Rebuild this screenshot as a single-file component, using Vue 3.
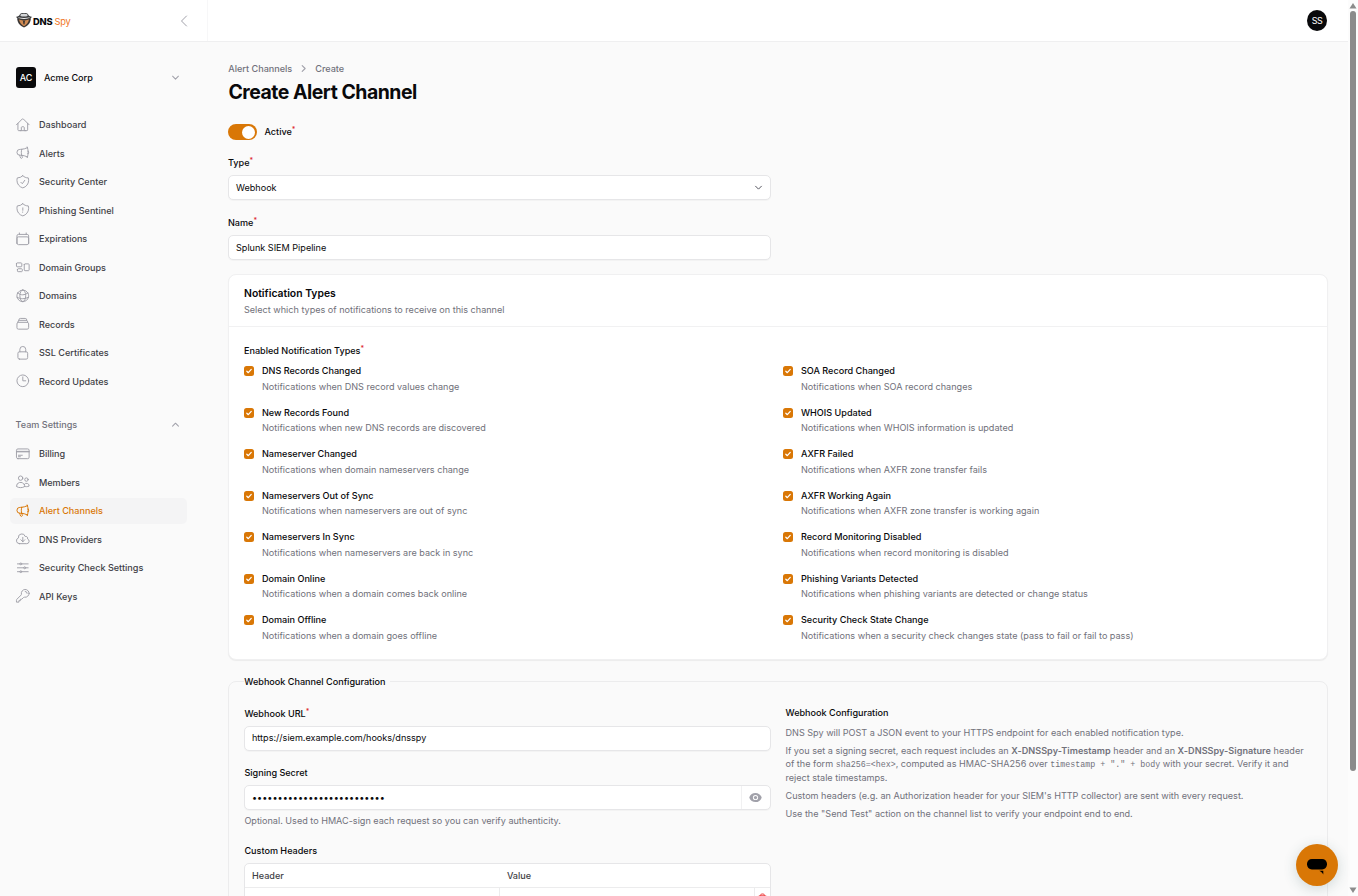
<template>
  <div class="app">
    <header class="topbar">
      <div class="topbar-brand">
        <div class="logo">
          <svg class="logo-mark" viewBox="0 0 16 16">
            <path d="M1.2 6.2h13.6c0 4.400-2.800 7.600-6.800 9.300C4 13.800 1.200 10.600 1.200 6.200Z" fill="#3a3634" />
            <path d="M3 7.600 8 8.700l5-1.100c-.5 3-2.500 5.200-5 6.700-2.500-1.500-4.500-3.700-5-6.700Z" fill="#d08a52" />
            <path d="M7.100 9h1.800L8.600 11.500 8 13l-.6-1.500Z" fill="#2b2b2d" />
            <path d="M.2 4.800c2-.5 3-.9 3.500-2C4 1.300 5 .9 8 .9s4 .4 4.300 1.900c.5 1.100 1.500 1.500 3.500 2-.4 1.800-3.800 2.700-7.800 2.700S.6 6.600.2 4.800Z" fill="#3a3b3d" />
            <path d="M4.700 2.200C6 1.500 10 1.500 11.300 2.200l.3 1.800c-2 .7-5.200.7-7.200 0Z" fill="#d4d6d8" />
            <path d="M1.800 5.300c3.700 1 8.700 1 12.400 0-1.300 1.300-3.500 1.700-6.200 1.700s-4.900-.4-6.200-1.700Z" fill="#f2f2f2" />
          </svg>
          <span class="logo-dns">DNS</span>
          <span class="logo-spy">Spy</span>
        </div>
        <svg class="collapse" viewBox="0 0 24 24"><path d="M15.750 19.500 8.250 12l7.500-7.500" /></svg>
      </div>
      <div class="avatar">SS</div>
    </header>

    <div class="body">
      <aside class="sidebar">
        <div class="tenant">
          <span class="tenant-badge">AC</span>
          <span class="tenant-name">Acme Corp</span>
          <svg class="chevron" viewBox="0 0 20 20"><path d="m5.500 8 4.500 4.500L14.500 8" /></svg>
        </div>
        <nav class="nav">
          <a v-for="item in mainNav" :key="item.label" class="nav-item">
            <svg viewBox="0 0 24 24"><path :d="icons[item.icon]" /></svg>
            <span>{{ item.label }}</span>
          </a>
        </nav>
        <div class="nav-group">
          <span>Team Settings</span>
          <svg class="chevron" viewBox="0 0 20 20"><path d="M5.500 12.500 10 8l4.500 4.500" /></svg>
        </div>
        <nav class="nav">
          <a
            v-for="item in teamNav"
            :key="item.label"
            :class="['nav-item', { active: item.label === current }]"
          >
            <svg viewBox="0 0 24 24"><path :d="icons[item.icon]" /></svg>
            <span>{{ item.label }}</span>
          </a>
        </nav>
      </aside>

      <main class="content">
        <div class="breadcrumbs">
          <span>Alert Channels</span>
          <svg class="crumb-sep" viewBox="0 0 20 20"><path d="m8 5.500 4.500 4.500L8 14.500" /></svg>
          <span>Create</span>
        </div>
        <h1>Create Alert Channel</h1>

        <div class="toggle-row">
          <button class="toggle" type="button" @click="active = !active">
            <span :class="['knob', { on: active }]"></span>
          </button>
          <span class="label">Active<sup>*</sup></span>
        </div>

        <div class="field half">
          <span class="label">Type<sup>*</sup></span>
          <div class="control">
            <span class="value">Webhook</span>
            <svg class="select-arrow" viewBox="0 0 20 20"><path d="m5.500 8 4.500 4.500L14.500 8" /></svg>
          </div>
        </div>

        <div class="field half">
          <span class="label">Name<sup>*</sup></span>
          <div class="control"><span class="value">Splunk SIEM Pipeline</span></div>
        </div>

        <section class="section">
          <div class="section-header">
            <h2>Notification Types</h2>
            <p>Select which types of notifications to receive on this channel</p>
          </div>
          <div class="section-body">
            <span class="label">Enabled Notification Types<sup>*</sup></span>
            <div class="check-grid">
              <div v-for="(column, i) in notifications" :key="i" class="check-col">
                <div v-for="[title, text] in column" :key="title" class="check">
                  <span class="box">
                    <svg viewBox="0 0 16 16"><path d="m4.500 8.400 2.400 2.300 4.700-5.200" /></svg>
                  </span>
                  <div>
                    <div class="check-title">{{ title }}</div>
                    <div class="check-text">{{ text }}</div>
                  </div>
                </div>
              </div>
            </div>
          </div>
        </section>

        <fieldset class="fieldset">
          <legend>Webhook Channel Configuration</legend>
          <div class="config">
            <div class="config-form">
              <div class="field">
                <span class="label">Webhook URL<sup>*</sup></span>
                <div class="control url"><span class="value">https://siem.example.com/hooks/dnsspy</span></div>
              </div>
              <div class="field secret">
                <span class="label">Signing Secret</span>
                <div class="control">
                  <input v-model="secret" class="password" type="password" />
                  <span class="suffix">
                    <svg viewBox="0 0 20 20">
                      <path d="M10 12.500a2.500 2.500 0 1 0 0-5 2.500 2.500 0 0 0 0 5Z" />
                      <path fill-rule="evenodd" d="M.664 10.590a1.651 1.651 0 0 1 0-1.186A10.004 10.004 0 0 1 10 3c4.257 0 7.893 2.660 9.336 6.410.147.381.146.804 0 1.186A10.004 10.004 0 0 1 10 17c-4.257 0-7.893-2.660-9.336-6.410ZM14 10a4 4 0 1 1-8 0 4 4 0 0 1 8 0Z" />
                    </svg>
                  </span>
                </div>
                <p class="hint">Optional. Used to HMAC-sign each request so you can verify authenticity.</p>
              </div>
              <div class="field">
                <span class="label">Custom Headers</span>
                <div class="kv">
                  <div class="kv-row kv-head">
                    <span>Header</span>
                    <span>Value</span>
                  </div>
                  <div class="kv-row kv-body">
                    <span></span>
                    <span></span>
                    <span class="kv-action">
                      <svg viewBox="0 0 20 20"><path fill-rule="evenodd" d="M8.750 1A2.750 2.750 0 0 0 6 3.750v.443c-.795.077-1.584.176-2.365.298a.75.75 0 1 0 .230 1.482l.149-.022.841 10.518A2.750 2.750 0 0 0 7.596 19h4.807a2.750 2.750 0 0 0 2.742-2.530l.841-10.520.149.023a.75.75 0 0 0 .230-1.482A41.030 41.030 0 0 0 14 4.193V3.750A2.750 2.750 0 0 0 11.250 1h-2.500ZM10 4c.840 0 1.673.025 2.500.075V3.750c0-.690-.560-1.250-1.250-1.250h-2.500c-.690 0-1.250.560-1.250 1.250v.325C8.327 4.025 9.160 4 10 4Z" /></svg>
                    </span>
                  </div>
                </div>
              </div>
            </div>

            <div class="config-help">
              <h3>Webhook Configuration</h3>
              <p>DNS Spy will POST a JSON event to your HTTPS endpoint for each enabled notification type.</p>
              <p>
                If you set a signing secret, each request includes an <strong>X-DNSSpy-Timestamp</strong> header and an
                <strong>X-DNSSpy-Signature</strong> header<br />of the form <code>sha256=&lt;hex&gt;</code>, computed as
                HMAC-SHA256 over <code>timestamp + "." + body</code> with your secret. Verify it and<br />reject stale
                timestamps.
              </p>
              <p>Custom headers (e.g. an Authorization header for your SIEM's HTTP collector) are sent with every request.</p>
              <p>Use the "Send Test" action on the channel list to verify your endpoint end to end.</p>
            </div>
          </div>
        </fieldset>
      </main>
    </div>

    <div class="scrollbar">
      <svg viewBox="0 0 10 10"><path d="M5 2.500 8.500 8h-7Z" /></svg>
      <span class="thumb"></span>
      <svg viewBox="0 0 10 10"><path d="M5 7.500 8.500 2h-7Z" /></svg>
    </div>

    <button class="chat" type="button">
      <svg viewBox="0 0 42 42">
        <rect x="11" y="15" width="20" height="10.400" rx="4.800" />
        <path d="M23.300 26.800h4v3.800c-1-1.800-2.300-3-4-3.800Z" />
      </svg>
    </button>
  </div>
</template>

<script setup>
import { ref } from 'vue'

const active = ref(true)
const current = ref('Alert Channels')
const secret = ref('x'.repeat(26))

const mainNav = [
  { label: 'Dashboard', icon: 'home' },
  { label: 'Alerts', icon: 'megaphone' },
  { label: 'Security Center', icon: 'shieldCheck' },
  { label: 'Phishing Sentinel', icon: 'shieldAlert' },
  { label: 'Expirations', icon: 'calendar' },
  { label: 'Domain Groups', icon: 'group' },
  { label: 'Domains', icon: 'globe' },
  { label: 'Records', icon: 'stack' },
  { label: 'SSL Certificates', icon: 'lock' },
  { label: 'Record Updates', icon: 'clock' }
]

const teamNav = [
  { label: 'Billing', icon: 'card' },
  { label: 'Members', icon: 'users' },
  { label: 'Alert Channels', icon: 'megaphone' },
  { label: 'DNS Providers', icon: 'cloud' },
  { label: 'Security Check Settings', icon: 'sliders' },
  { label: 'API Keys', icon: 'key' }
]

const notifications = [
  [
    ['DNS Records Changed', 'Notifications when DNS record values change'],
    ['New Records Found', 'Notifications when new DNS records are discovered'],
    ['Nameserver Changed', 'Notifications when domain nameservers change'],
    ['Nameservers Out of Sync', 'Notifications when nameservers are out of sync'],
    ['Nameservers In Sync', 'Notifications when nameservers are back in sync'],
    ['Domain Online', 'Notifications when a domain comes back online'],
    ['Domain Offline', 'Notifications when a domain goes offline']
  ],
  [
    ['SOA Record Changed', 'Notifications when SOA record changes'],
    ['WHOIS Updated', 'Notifications when WHOIS information is updated'],
    ['AXFR Failed', 'Notifications when AXFR zone transfer fails'],
    ['AXFR Working Again', 'Notifications when AXFR zone transfer is working again'],
    ['Record Monitoring Disabled', 'Notifications when record monitoring is disabled'],
    ['Phishing Variants Detected', 'Notifications when phishing variants are detected or change status'],
    ['Security Check State Change', 'Notifications when a security check changes state (pass to fail or fail to pass)']
  ]
]

const icons = {
  home: 'm2.250 12 8.954-8.955c.440-.439 1.152-.439 1.591 0L21.750 12M4.500 9.750v10.125c0 .621.504 1.125 1.125 1.125H9.750v-4.875c0-.621.504-1.125 1.125-1.125h2.250c.621 0 1.125.504 1.125 1.125V21h4.125c.621 0 1.125-.504 1.125-1.125V9.750M8.250 21h8.250',
  megaphone: 'M10.340 15.840c-.688-.060-1.386-.090-2.090-.090H7.500a4.500 4.500 0 1 1 0-9h.750c.704 0 1.402-.030 2.090-.090m0 9.180c.253.962.584 1.892.985 2.783.247.550.060 1.210-.463 1.511l-.657.380c-.551.318-1.260.117-1.527-.461a20.845 20.845 0 0 1-1.440-4.282m3.102.069a18.030 18.030 0 0 1-.590-4.590c0-1.586.205-3.124.590-4.590m0 9.180a23.848 23.848 0 0 1 8.835 2.535M10.340 6.660a23.847 23.847 0 0 0 8.835-2.535m0 0A23.740 23.740 0 0 0 18.795 3m.380 1.125a23.910 23.910 0 0 1 1.014 5.395m-1.014 8.855c-.118.380-.245.754-.380 1.125m.380-1.125a23.910 23.910 0 0 0 1.014-5.395m0-3.460c.495.413.811 1.035.811 1.730 0 .695-.316 1.317-.811 1.730m0-3.460a24.347 24.347 0 0 1 0 3.460',
  shieldCheck: 'M9 12.750 11.250 15 15 9.750m-3-7.036A11.959 11.959 0 0 1 3.598 6 11.990 11.990 0 0 0 3 9.749c0 5.592 3.824 10.290 9 11.623 5.176-1.332 9-6.030 9-11.622 0-1.310-.210-2.571-.598-3.751h-.152c-3.196 0-6.100-1.248-8.250-3.285Z',
  shieldAlert: 'M12 9v3.750m0-10.036A11.959 11.959 0 0 1 3.598 6 11.990 11.990 0 0 0 3 9.749c0 5.592 3.824 10.290 9 11.622 5.176-1.332 9-6.030 9-11.622 0-1.310-.210-2.570-.598-3.750h-.152c-3.196 0-6.100-1.249-8.250-3.286Zm0 13.036h.008v.008H12v-.008Z',
  calendar: 'M6.750 3v2.250M17.250 3v2.250M3 18.750V7.500a2.250 2.250 0 0 1 2.250-2.250h13.500A2.250 2.250 0 0 1 21 7.500v11.250m-18 0A2.250 2.250 0 0 0 5.250 21h13.500A2.250 2.250 0 0 0 21 18.750m-18 0v-7.500A2.250 2.250 0 0 1 5.250 9h13.500A2.250 2.250 0 0 1 21 11.250v7.500',
  group: 'M2.250 7.125C2.250 6.504 2.754 6 3.375 6h6c.621 0 1.125.504 1.125 1.125v3.750c0 .621-.504 1.125-1.125 1.125h-6a1.125 1.125 0 0 1-1.125-1.125v-3.750ZM14.250 8.625c0-.621.504-1.125 1.125-1.125h5.250c.621 0 1.125.504 1.125 1.125v8.250c0 .621-.504 1.125-1.125 1.125h-5.250a1.125 1.125 0 0 1-1.125-1.125v-8.250ZM3.750 16.125c0-.621.504-1.125 1.125-1.125h5.250c.621 0 1.125.504 1.125 1.125v2.250c0 .621-.504 1.125-1.125 1.125h-5.250a1.125 1.125 0 0 1-1.125-1.125v-2.250Z',
  globe: 'M12 21a9.004 9.004 0 0 0 8.716-6.747M12 21a9.004 9.004 0 0 1-8.716-6.747M12 21c2.485 0 4.500-4.030 4.500-9S14.485 3 12 3m0 18c-2.485 0-4.500-4.030-4.500-9S9.515 3 12 3m0 0a8.997 8.997 0 0 1 7.843 4.582M12 3a8.997 8.997 0 0 0-7.843 4.582m15.686 0A11.953 11.953 0 0 1 12 10.500c-2.998 0-5.740-1.100-7.843-2.918m15.686 0A8.959 8.959 0 0 1 21 12c0 .778-.099 1.533-.284 2.253m0 0A17.919 17.919 0 0 1 12 16.500c-3.162 0-6.133-.815-8.716-2.247m0 0A9.015 9.015 0 0 1 3 12c0-1.605.420-3.113 1.157-4.418',
  stack: 'M6 6.878V6a2.250 2.250 0 0 1 2.250-2.250h7.500A2.250 2.250 0 0 1 18 6v.878m-12 0c.235-.083.487-.128.750-.128h10.500c.263 0 .515.045.750.128m-12 0A2.250 2.250 0 0 0 4.500 9v.878m13.500-3A2.250 2.250 0 0 1 19.500 9v.878m0 0a2.246 2.246 0 0 0-.750-.128H5.250c-.263 0-.515.045-.750.128m15 0A2.250 2.250 0 0 1 21 12v6a2.250 2.250 0 0 1-2.250 2.250H5.250A2.250 2.250 0 0 1 3 18v-6c0-.980.626-1.813 1.500-2.122',
  lock: 'M16.500 10.500V6.750a4.500 4.500 0 1 0-9 0v3.750m-.750 11.250h10.500a2.250 2.250 0 0 0 2.250-2.250v-6.750a2.250 2.250 0 0 0-2.250-2.250H6.750a2.250 2.250 0 0 0-2.250 2.250v6.750a2.250 2.250 0 0 0 2.250 2.250Z',
  clock: 'M12 6v6h4.500m4.500 0a9 9 0 1 1-18 0 9 9 0 0 1 18 0Z',
  card: 'M2.250 8.250h19.500M2.250 9h19.500m-16.500 5.250h6m-6 2.250h3m-3.750 3h15a2.250 2.250 0 0 0 2.250-2.250V6.750A2.250 2.250 0 0 0 19.500 4.500h-15a2.250 2.250 0 0 0-2.250 2.250v10.500A2.250 2.250 0 0 0 4.500 19.500Z',
  users: 'M15 19.128a9.380 9.380 0 0 0 2.625.372 9.337 9.337 0 0 0 4.121-.952 4.125 4.125 0 0 0-7.533-2.493M15 19.128v-.003c0-1.113-.285-2.160-.786-3.070M15 19.128v.106A12.318 12.318 0 0 1 8.624 21c-2.331 0-4.512-.645-6.374-1.766l-.001-.109a6.375 6.375 0 0 1 11.964-3.070M12 6.375a3.375 3.375 0 1 1-6.750 0 3.375 3.375 0 0 1 6.750 0Zm8.250 2.250a2.625 2.625 0 1 1-5.250 0 2.625 2.625 0 0 1 5.250 0Z',
  cloud: 'M12 9.750v6.750m0 0-3-3m3 3 3-3m-8.250 6a4.500 4.500 0 0 1-1.410-8.775 5.250 5.250 0 0 1 10.233-2.330 3 3 0 0 1 3.758 3.848A3.752 3.752 0 0 1 18 19.500H6.750Z',
  sliders: 'M10.500 6h9.750M10.500 6a1.500 1.500 0 1 1-3 0m3 0a1.500 1.500 0 1 0-3 0M3.750 6H7.500m3 12h9.750m-9.750 0a1.500 1.500 0 0 1-3 0m3 0a1.500 1.500 0 0 0-3 0m-3.750 0H7.500m9-6h3.750m-3.750 0a1.500 1.500 0 0 1-3 0m3 0a1.500 1.500 0 0 0-3 0m-9.750 0h9.750',
  key: 'M15.750 5.250a3 3 0 0 1 3 3m3 0a6 6 0 0 1-7.029 5.912c-.563-.097-1.159.026-1.563.430L10.500 17.250H8.250v2.250H6v2.250H2.250v-2.818c0-.597.237-1.170.659-1.591l6.499-6.499c.404-.404.527-1 .430-1.563A6 6 0 1 1 21.750 8.250Z'
}
</script>

<style>
html,
body {
  margin: 0;
  overflow: hidden;
  background: #fafafa;
}
</style>

<style scoped>
.app {
  position: relative;
  width: 1358px;
  height: 896px;
  overflow: hidden;
  background: #fafafa;
  color: #09090b;
  font-family: Inter, 'Liberation Sans', sans-serif;
  font-size: 9.08px;
  line-height: 13px;
}

.app * {
  box-sizing: border-box;
}

svg {
  flex: none;
  fill: none;
  stroke-linecap: round;
  stroke-linejoin: round;
}

button {
  padding: 0;
  border: 0;
}

h1,
h2,
h3,
p {
  margin: 0;
}

.topbar {
  display: flex;
  align-items: center;
  justify-content: space-between;
  width: 1348px;
  height: 42px;
  padding-right: 21px;
  background: #fff;
  border-bottom: 1px solid #efeff0;
}

.topbar-brand {
  display: flex;
  align-items: center;
  justify-content: space-between;
  width: 208px;
  height: 41px;
  padding: 0 15.5px;
  border-right: 1px solid #f7f7f8;
}

.logo {
  display: flex;
  align-items: center;
  margin-top: -1px;
  font-size: 9.3px;
}

.logo-mark {
  width: 16px;
  height: 16px;
}

.logo-dns {
  margin: 3px 2px 0 1.5px;
  font-weight: 800;
  letter-spacing: -0.15px;
}

.logo-spy {
  margin-top: 3px;
  color: #f0761d;
  letter-spacing: -0.3px;
}

.collapse {
  width: 16px;
  height: 16px;
  stroke: #a1a1aa;
  stroke-width: 1.5;
}

.avatar {
  width: 20px;
  height: 21px;
  border-radius: 50%;
  background: #09090b;
  color: #fff;
  font-size: 9px;
  line-height: 21px;
  text-align: center;
  letter-spacing: -0.4px;
}

.body {
  display: flex;
}

.sidebar {
  width: 207px;
  padding: 25px 20px 0 10px;
}

.tenant {
  display: flex;
  align-items: center;
  height: 21px;
  padding: 0 5px 0 6px;
  font-weight: 500;
}

.tenant-badge {
  width: 20px;
  height: 21px;
  margin-right: 8px;
  border-radius: 3px;
  background: #09090b;
  color: #fff;
  font-size: 9px;
  line-height: 21px;
  text-align: center;
}

.chevron {
  width: 13px;
  height: 13px;
  margin-left: auto;
  stroke: #a1a1aa;
  stroke-width: 1.6;
}

.nav {
  display: flex;
  flex-direction: column;
  gap: 2.5px;
}

.tenant + .nav {
  margin-top: 23.5px;
}

.tenant + .nav .nav-item:nth-child(even) span {
  margin-top: 0.3px;
}

.nav-item {
  display: flex;
  align-items: center;
  gap: 7.8px;
  height: 26px;
  padding: 0 5.3px;
  border-radius: 5px;
  color: #3f3f46;
  font-weight: 500;
}

.nav-item svg {
  width: 15.6px;
  height: 15.6px;
  margin-right: 0.3px;
  stroke: #a1a1aa;
  stroke-width: 1.5;
}

.nav-item.active {
  background: #f4f4f5;
  color: #d97706;
}

.nav-item.active svg {
  stroke: #d97706;
}

.nav-group {
  display: flex;
  align-items: center;
  height: 26px;
  margin: 17.4px 0 3.4px;
  padding: 0 5px 0 5.5px;
  color: #71717a;
  font-weight: 500;
}

.content {
  width: 1100px;
  margin-left: 21px;
  padding-top: 20px;
}

.breadcrumbs {
  display: flex;
  align-items: center;
  padding-left: 0.3px;
  color: #71717a;
  font-weight: 500;
}

.crumb-sep {
  width: 13px;
  height: 13px;
  margin: 0 5px;
  stroke: #a1a1aa;
  stroke-width: 1.7;
}

h1 {
  margin-top: 6px;
  padding-left: 0.4px;
  font-size: 19.45px;
  font-weight: 700;
  line-height: 23px;
  letter-spacing: -0.49px;
}

.label {
  display: block;
  height: 13px;
  font-weight: 500;
  white-space: nowrap;
}

.label sup {
  position: relative;
  top: -3px;
  color: #dc2626;
  font-size: 7px;
  line-height: 0;
  vertical-align: baseline;
}

.toggle-row {
  display: flex;
  align-items: flex-start;
  gap: 8px;
  height: 16px;
  margin-top: 20px;
}

.toggle-row .label {
  margin-top: 1px;
}

.toggle {
  display: flex;
  width: 28.5px;
  height: 16px;
  padding: 1.5px;
  border-radius: 8px;
  background: #d97706;
}

.knob {
  width: 13px;
  height: 13px;
  border-radius: 50%;
  background: #fff;
}

.knob.on {
  margin-left: auto;
}

.half {
  width: 542.5px;
}

.content > .field {
  margin-top: 16px;
}

.control {
  display: flex;
  align-items: center;
  height: 25px;
  margin-top: 6px;
  padding-left: 7px;
  border: 1px solid #e6e6e8;
  border-radius: 5px;
  background: #fff;
  box-shadow: 0 1px 1px rgba(0, 0, 0, 0.03);
}

.control.url {
  padding-bottom: 1px;
}

.select-arrow {
  width: 13px;
  height: 13px;
  margin: 0 5px 0 auto;
  stroke: #52525b;
  stroke-width: 1.5;
}

.section {
  height: 385.3px;
  margin-top: 14.4px;
  border: 1px solid #f0f0f1;
  border-radius: 8px;
  background: #fff;
  box-shadow: 0 1px 1px rgba(0, 0, 0, 0.06);
}

.section-header {
  height: 52px;
  padding: 10.6px 15px 0;
  border-bottom: 1px solid #f1f1f2;
}

h2 {
  font-size: 10.38px;
  font-weight: 600;
  line-height: 15px;
}

.section-header p {
  margin-top: 2px;
  color: #71717a;
}

.section-body {
  padding: 16.6px 15px 0;
}

.check-grid {
  display: grid;
  grid-template-columns: 539px 1fr;
  margin-top: 7.2px;
}

.check {
  display: flex;
  gap: 8px;
  height: 41.5px;
}

.box {
  display: flex;
  width: 10px;
  height: 10px;
  margin-top: 2px;
  border-radius: 2.5px;
  background: #d97706;
}

.box svg {
  width: 10px;
  height: 10px;
  stroke: #fff;
  stroke-width: 2;
}

.check-title {
  font-weight: 500;
}

.check-text {
  margin-top: 2.6px;
  color: #71717a;
}

.fieldset {
  height: 260px;
  margin: 15.6px 0 0;
  padding: 0 15px;
  border: 1px solid #ececed;
  border-radius: 8px;
}

legend {
  height: 13px;
  padding: 0 5px 0 0.3px;
  font-weight: 500;
}

.config {
  display: grid;
  grid-template-columns: 526.5px 1fr;
  gap: 15px;
  padding-top: 18px;
}

.config-form {
  padding-top: 0.6px;
}

.config-form .label {
  padding-left: 0.4px;
}

.secret {
  margin: 15.2px 0 17.3px;
}

.password {
  flex: 1;
  min-width: 0;
  padding: 0;
  border: 0;
  outline: 0;
  background: transparent;
  color: #09090b;
  font: inherit;
}

.suffix {
  display: flex;
  align-items: center;
  justify-content: center;
  width: 29px;
  height: 23px;
  border-left: 1px solid #f1f1f2;
}

.suffix svg {
  width: 13px;
  height: 13px;
  fill: #a1a1aa;
}

.hint {
  margin-top: 4px;
  padding-left: 0.4px;
  color: #71717a;
}

.kv {
  margin-top: 6px;
  height: 60px;
  border: 1px solid #e6e6e8;
  border-radius: 5px;
  background: #fff;
}

.kv-row {
  display: grid;
  grid-template-columns: 254.9px 1fr 16px;
  height: 24px;
}

.kv-head {
  align-items: center;
  padding-left: 7px;
  border-bottom: 1px solid #ececed;
  color: #3f3f46;
  font-weight: 500;
}

.kv-body {
  grid-template-columns: 254px 1fr 16px;
}

.kv-body > span + span {
  border-left: 1px solid #ececed;
}

.kv-action svg {
  width: 11px;
  height: 11px;
  margin: 4.5px 0 0 2px;
  fill: #ef4444;
}

.config-help {
  color: #71717a;
  white-space: nowrap;
}

h3 {
  color: #09090b;
  font-size: 9.08px;
  font-weight: 500;
}

.config-help p {
  margin-top: 4.8px;
  line-height: 13.2px;
}

.config-help h3 + p {
  margin-top: 7px;
}

strong {
  font-weight: 600;
  letter-spacing: 0.04px;
}

code {
  font-family: 'Liberation Mono', monospace;
  font-size: 8.33px;
  line-height: 0;
}

.scrollbar {
  position: absolute;
  top: 0;
  right: 0;
  display: flex;
  flex-direction: column;
  align-items: center;
  justify-content: space-between;
  width: 10px;
  height: 896px;
  background: #fcfcfc;
}

.scrollbar svg {
  width: 10px;
  height: 11px;
  fill: #8b8b8b;
}

.thumb {
  width: 6px;
  height: 760px;
  margin-bottom: auto;
  border-radius: 3px;
  background: #8b8b8b;
}

.chat {
  position: absolute;
  right: 20px;
  bottom: 10px;
  width: 42px;
  height: 42px;
  border-radius: 50%;
  background: #d97706;
  box-shadow: 0 3px 14px rgba(40, 80, 80, 0.2);
}

.chat svg {
  display: block;
  width: 42px;
  height: 42px;
  fill: #000;
}
</style>
